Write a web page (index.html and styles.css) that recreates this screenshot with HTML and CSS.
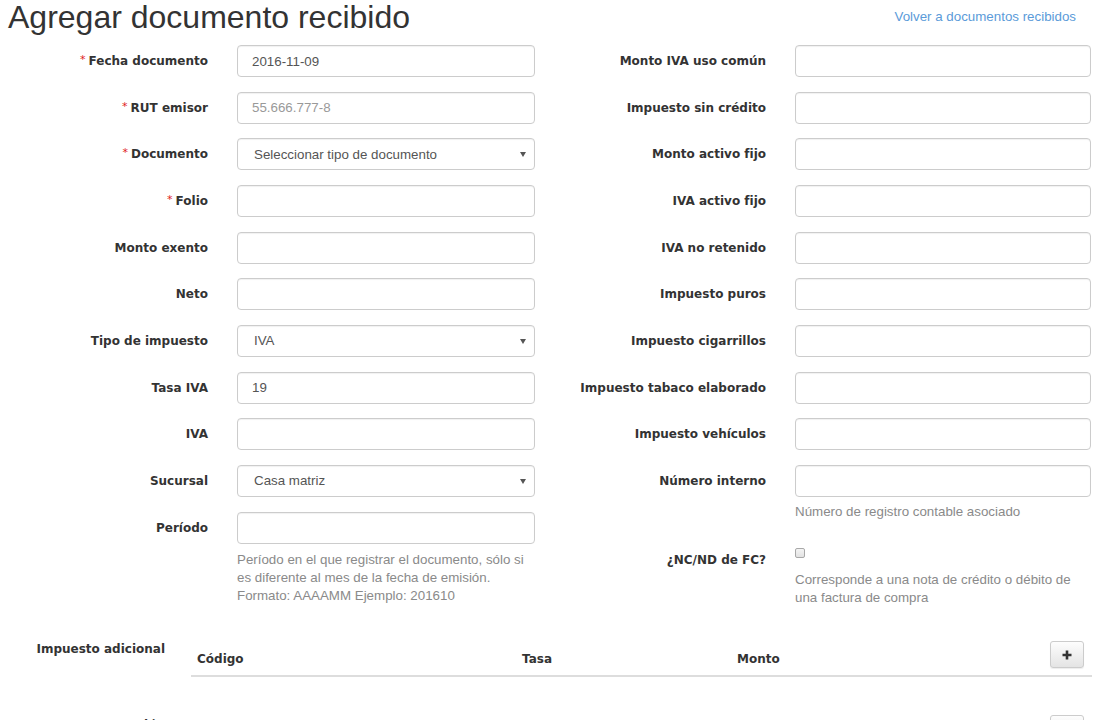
FILE: index.html
```html
<!DOCTYPE html>
<html lang="es">
<head>
<meta charset="utf-8">
<title>Agregar documento recibido</title>
<link rel="stylesheet" href="styles.css">
</head>
<body>
<div class="page">
  <header class="head">
    <h1 class="title">Agregar documento recibido</h1>
    <a class="back" href="#">Volver a documentos recibidos</a>
  </header>

  <form class="form">
    <div class="cols">
      <div class="col col-left">
        <div class="group">
          <label class="lbl"><span class="req">*</span>Fecha documento</label>
          <input class="ctl" type="text" value="2016-11-09">
        </div>
        <div class="group">
          <label class="lbl"><span class="req">*</span>RUT emisor</label>
          <input class="ctl" type="text" placeholder="55.666.777-8">
        </div>
        <div class="group">
          <label class="lbl"><span class="req">*</span>Documento</label>
          <div class="sel"><select class="ctl"><option>Seleccionar tipo de documento</option></select></div>
        </div>
        <div class="group">
          <label class="lbl"><span class="req">*</span>Folio</label>
          <input class="ctl" type="text">
        </div>
        <div class="group">
          <label class="lbl">Monto exento</label>
          <input class="ctl" type="text">
        </div>
        <div class="group">
          <label class="lbl">Neto</label>
          <input class="ctl" type="text">
        </div>
        <div class="group">
          <label class="lbl">Tipo de impuesto</label>
          <div class="sel"><select class="ctl"><option>IVA</option></select></div>
        </div>
        <div class="group">
          <label class="lbl">Tasa IVA</label>
          <input class="ctl" type="text" value="19">
        </div>
        <div class="group">
          <label class="lbl">IVA</label>
          <input class="ctl" type="text">
        </div>
        <div class="group">
          <label class="lbl">Sucursal</label>
          <div class="sel"><select class="ctl"><option>Casa matriz</option></select></div>
        </div>
        <div class="group">
          <label class="lbl">Período</label>
          <div class="field">
            <input class="ctl" type="text">
            <p class="help help-period">Período en el que registrar el documento, sólo si es diferente al mes de la fecha de emisión. Formato: AAAAMM Ejemplo: 201610</p>
          </div>
        </div>
      </div>

      <div class="col col-right">
        <div class="group">
          <label class="lbl">Monto IVA uso común</label>
          <input class="ctl" type="text">
        </div>
        <div class="group">
          <label class="lbl">Impuesto sin crédito</label>
          <input class="ctl" type="text">
        </div>
        <div class="group">
          <label class="lbl">Monto activo fijo</label>
          <input class="ctl" type="text">
        </div>
        <div class="group">
          <label class="lbl">IVA activo fijo</label>
          <input class="ctl" type="text">
        </div>
        <div class="group">
          <label class="lbl">IVA no retenido</label>
          <input class="ctl" type="text">
        </div>
        <div class="group">
          <label class="lbl">Impuesto puros</label>
          <input class="ctl" type="text">
        </div>
        <div class="group">
          <label class="lbl">Impuesto cigarrillos</label>
          <input class="ctl" type="text">
        </div>
        <div class="group">
          <label class="lbl">Impuesto tabaco elaborado</label>
          <input class="ctl" type="text">
        </div>
        <div class="group">
          <label class="lbl">Impuesto vehículos</label>
          <input class="ctl" type="text">
        </div>
        <div class="group">
          <label class="lbl">Número interno</label>
          <div class="field">
            <input class="ctl" type="text">
            <p class="help help-num">Número de registro contable asociado</p>
          </div>
        </div>
        <div class="group group-check">
          <label class="lbl lbl-check">¿NC/ND de FC?</label>
          <div class="field">
            <input class="chk" type="checkbox">
            <p class="help help-check">Corresponde a una nota de crédito o débito de una factura de compra</p>
          </div>
        </div>
      </div>
    </div>

    <div class="section">
      <div class="sec-lbl">Impuesto adicional</div>
      <table class="tbl">
        <thead>
          <tr>
            <th class="c-cod">Código</th>
            <th class="c-tasa">Tasa</th>
            <th class="c-monto">Monto</th>
            <th class="c-btn"><button type="button" class="btn-add"><svg width="10" height="10" viewBox="0 0 10 10"><path d="M5 0.5v9M0.5 5h9" stroke="#333" stroke-width="2.6"/></svg></button></th>
          </tr>
        </thead>
      </table>
    </div>

    <div class="section">
      <div class="sec-lbl sec-lbl-low">Retención</div>
      <table class="tbl">
        <thead>
          <tr>
            <th class="c-cod">Código</th>
            <th class="c-tasa">Tasa</th>
            <th class="c-monto">Monto</th>
            <th class="c-btn"><button type="button" class="btn-add"><svg width="10" height="10" viewBox="0 0 10 10"><path d="M5 0.5v9M0.5 5h9" stroke="#333" stroke-width="2.6"/></svg></button></th>
          </tr>
        </thead>
      </table>
    </div>
  </form>
</div>
</body>
</html>
```

FILE: styles.css
```css
* { box-sizing: border-box; }

html, body {
  margin: 0;
  padding: 0;
  background: #fff;
}

body {
  font-family: "Liberation Sans", Arial, sans-serif;
  font-size: 13.33px;
  color: #333;
  overflow: hidden;
}

.page {
  width: 1100px;
  padding: 0 8px;
}

.head {
  display: flex;
  justify-content: space-between;
  align-items: flex-start;
  margin-bottom: 9px;
}

.title {
  margin: -2px 0 0 0;
  font-size: 32px;
  line-height: 38px;
  font-weight: normal;
  color: #333;
}

.back {
  margin-top: 8px;
  margin-right: 16px;
  line-height: 18px;
  font-size: 13.33px;
  color: #5b9bd9;
  text-decoration: none;
}

.cols {
  display: grid;
  grid-template-columns: 527px 527px;
  column-gap: 29px;
  align-items: start;
}

.group {
  display: grid;
  grid-template-columns: 1fr 298px;
  column-gap: 29px;
  margin-bottom: 14.67px;
}

.col-right .group {
  grid-template-columns: 1fr 296px;
}

.lbl {
  display: block;
  height: 32px;
  overflow: visible;
  font-family: "DejaVu Sans", sans-serif;
  font-weight: bold;
  font-size: 12px;
  line-height: 32px;
  text-align: right;
  white-space: nowrap;
  color: #333;
}

.req {
  color: #e02020;
  font-weight: normal;
  font-size: 11px;
  line-height: 1;
  margin-right: 3px;
  vertical-align: top;
  position: relative;
  top: 9px;
}

.ctl {
  display: block;
  width: 100%;
  height: 32px;
  margin: 0;
  padding: 0 12px 0 14px;
  border: 1px solid #ccc;
  border-radius: 4px;
  background: #fff;
  font-family: "Liberation Sans", Arial, sans-serif;
  font-size: 13.33px;
  color: #555;
  box-shadow: inset 0 1px 1px rgba(0,0,0,0.06);
  outline: none;
}

.ctl::placeholder {
  color: #999;
}

.sel {
  position: relative;
}

.sel select {
  -webkit-appearance: none;
  appearance: none;
  padding-left: 16px;
}

.sel::after {
  content: "";
  position: absolute;
  right: 9px;
  top: 14px;
  border-left: 3px solid transparent;
  border-right: 3px solid transparent;
  border-top: 5px solid #555;
  pointer-events: none;
}

.field {
  display: flex;
  flex-direction: column;
  align-items: flex-start;
}

.help {
  margin: 0;
  font-size: 13.33px;
  line-height: 18px;
  color: #8a8a8a;
}

.help-period { margin-top: 7px; }
.help-num { margin-top: 6px; }
.help-check { margin-top: 13px; }

.lbl-check {
  height: auto;
  line-height: 18px;
  padding-top: 15px;
}

.chk {
  -webkit-appearance: none;
  appearance: none;
  width: 10px;
  height: 10px;
  margin: 12px 0 0 0;
  border: 1px solid #a8a8a8;
  border-radius: 2px;
  background: linear-gradient(#f4f4f4, #e2e2e2);
}

.section {
  display: grid;
  grid-template-columns: 157px 901px;
  column-gap: 26px;
}

.cols + .section { margin-top: 12px; }

.section + .section { margin-top: 30px; }

.sec-lbl {
  font-family: "DejaVu Sans", sans-serif;
  font-weight: bold;
  font-size: 12px;
  line-height: 18px;
  padding-top: 7px;
  text-align: right;
  white-space: nowrap;
  color: #333;
}

.sec-lbl-low {
  padding-top: 9px;
}

.tbl {
  width: 901px;
  border-collapse: collapse;
  table-layout: fixed;
}

.tbl th {
  font-family: "DejaVu Sans", sans-serif;
  font-weight: bold;
  font-size: 12px;
  line-height: 18px;
  text-align: left;
  vertical-align: bottom;
  padding: 8px 6px 7px 6px;
  border-bottom: 2px solid #ddd;
  color: #333;
}

.c-cod { width: 325px; }
.c-tasa { width: 215px; }
.c-monto { width: 313px; }
.c-btn { width: 48px; }

.tbl th.c-btn {
  text-align: right;
  padding-right: 8px;
}

.btn-add {
  display: inline-flex;
  align-items: center;
  justify-content: center;
  width: 34px;
  height: 27px;
  padding: 0;
  border: 1px solid #ccc;
  border-radius: 3px;
  background: linear-gradient(#fdfdfd, #e4e4e4);
  box-shadow: inset 0 1px 0 rgba(255,255,255,0.15), 0 1px 1px rgba(0,0,0,0.075);
  vertical-align: bottom;
}

.btn-add svg { display: block; }
```
